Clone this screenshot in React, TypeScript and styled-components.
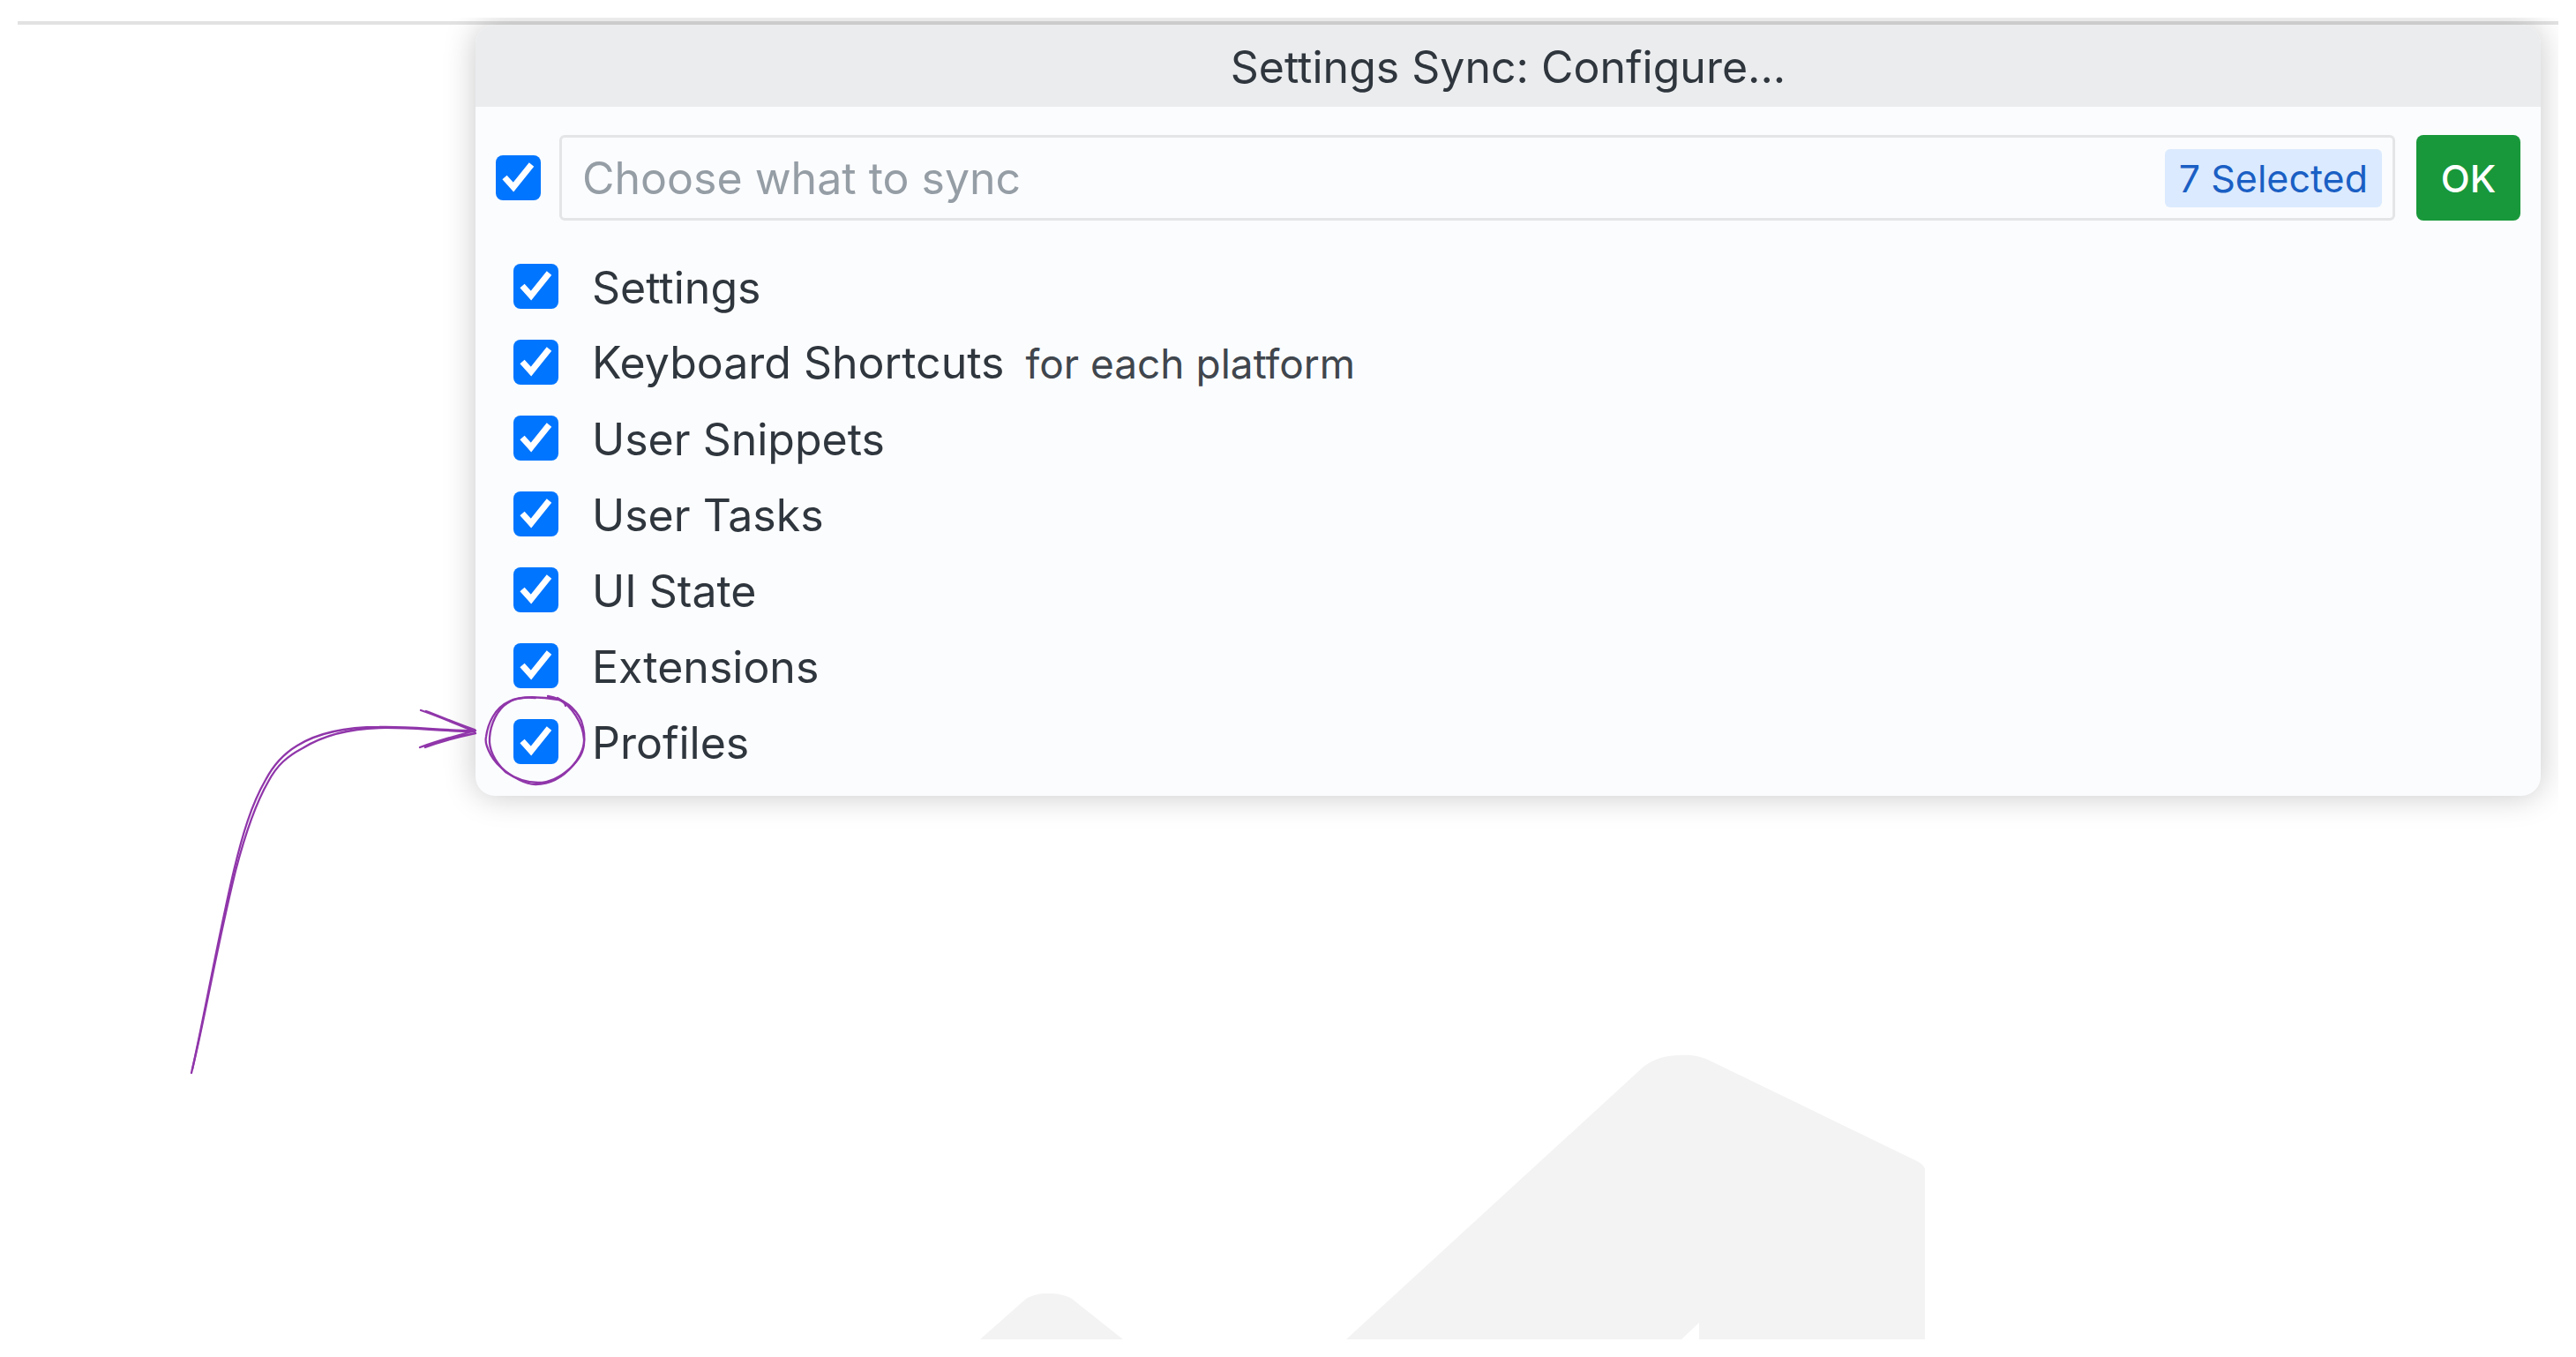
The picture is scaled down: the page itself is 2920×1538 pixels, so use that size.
import React, { useState } from "react";
import styled, { createGlobalStyle } from "styled-components";

const GlobalStyle = createGlobalStyle`
  *, *::before, *::after { box-sizing: border-box; }
  body {
    margin: 0;
    background: #ffffff;
    font-family: Inter, "Liberation Sans", sans-serif;
  }
`;

const Page = styled.main`
  display: flex;
  min-height: 100vh;
  padding: 20px;
`;

const EditorWindow = styled.div`
  display: flex;
  flex: 1;
  flex-direction: column;
  overflow: hidden;
  background: #ffffff;
`;

const WindowEdge = styled.div`
  flex: none;
  height: 8px;
  border-bottom: 4px solid #e2e2e2;
`;

const Workspace = styled.div`
  display: flex;
  flex: 1;
  flex-direction: column;
  justify-content: space-between;
`;

const QuickPick = styled.form`
  position: relative;
  margin: 0 20px 0 519px;
  border-radius: 22px;
  background: #fbfcfe;
  box-shadow: 0 0 36px rgba(0, 0, 0, 0.22);
`;

const Title = styled.h1`
  margin: 0;
  padding: 18px 24px 15px;
  border-radius: 22px 22px 0 0;
  background: #ebecee;
  color: #2f363d;
  font-size: 50px;
  font-weight: 400;
  line-height: 60px;
  text-align: center;
`;

const Toolbar = styled.div`
  display: flex;
  align-items: center;
  gap: 24px;
  padding: 32px 23px 0;
`;

const FilterGroup = styled.div`
  display: flex;
  flex: 1;
  align-items: center;
  gap: 21px;
`;

const FilterField = styled.div`
  display: flex;
  flex: 1;
  align-items: center;
  height: 97px;
  padding: 0 12px 0 23px;
  border: 3px solid #e4e5e7;
  border-radius: 6px;
`;

const FilterInput = styled.input`
  flex: 1;
  min-width: 0;
  padding: 0;
  border: 0;
  outline: 0;
  background: transparent;
  color: #2f363d;
  font: 400 50px/60px Inter, "Liberation Sans", sans-serif;

  &::placeholder {
    color: #959da5;
    opacity: 1;
  }
`;

const CountBadge = styled.span`
  padding: 3px 16px;
  border-radius: 6px;
  background: #dbeafe;
  color: #1a5fc4;
  font-size: 43px;
  line-height: 60px;
`;

const OkButton = styled.button`
  width: 118px;
  height: 97px;
  padding: 0;
  border: 0;
  border-radius: 8px;
  background: #18983a;
  color: #ffffff;
  font: 500 43px/60px Inter, "Liberation Sans", sans-serif;
`;

const CheckBox = styled.span`
  position: relative;
  flex: none;
  width: 51px;
  height: 51px;
`;

const CheckInput = styled.input`
  display: block;
  width: 100%;
  height: 100%;
  margin: 0;
  appearance: none;
  border-radius: 8px;
  background: #ffffff;
  box-shadow: inset 0 0 0 2px #c4c8cc;

  &:checked {
    background: #0075ff;
    box-shadow: none;
  }
`;

const CheckMark = styled.svg`
  position: absolute;
  inset: 0;
  pointer-events: none;
`;

const OptionList = styled.ul`
  margin: 0;
  padding: 31px 43px 19px;
  list-style: none;
`;

const Option = styled.label`
  display: flex;
  align-items: center;
  gap: 38px;
  height: 86px;
`;

const OptionText = styled.span`
  display: flex;
  align-items: baseline;
  gap: 24px;
  padding-top: 3px;
  color: #2f363d;
  font-size: 50px;
  line-height: 60px;
`;

const OptionDetail = styled.small`
  color: #40464d;
  font-size: 46px;
`;

const Annotation = styled.svg`
  position: absolute;
  left: -339px;
  bottom: -338px;
  width: 480px;
  height: 460px;
  pointer-events: none;
`;

const Watermark = styled.svg`
  flex: none;
  display: block;
  width: 1080px;
  height: 324px;
  margin-left: 1086px;
`;

const OPTIONS = [
  { id: "settings", label: "Settings" },
  { id: "keybindings", label: "Keyboard Shortcuts", detail: "for each platform" },
  { id: "snippets", label: "User Snippets" },
  { id: "tasks", label: "User Tasks" },
  { id: "state", label: "UI State" },
  { id: "extensions", label: "Extensions" },
  { id: "profiles", label: "Profiles" },
];

type TickProps = {
  id?: string;
  label?: string;
  checked: boolean;
  onChange: () => void;
};

function Tick({ id, label, checked, onChange }: TickProps) {
  return (
    <CheckBox>
      <CheckInput id={id} type="checkbox" aria-label={label} checked={checked} onChange={onChange} />
      {checked && (
        <CheckMark viewBox="0 0 51 51" aria-hidden="true">
          <path d="M10 25 L20 36 L40.5 10.5" fill="none" stroke="#ffffff" strokeWidth="7" />
        </CheckMark>
      )}
    </CheckBox>
  );
}

export default function App() {
  const [selected, setSelected] = useState<string[]>(OPTIONS.map((o) => o.id));
  const allSelected = selected.length === OPTIONS.length;

  const toggle = (id: string) =>
    setSelected((cur) => (cur.includes(id) ? cur.filter((x) => x !== id) : [...cur, id]));

  return (
    <>
      <GlobalStyle />
      <Page>
        <EditorWindow>
          <WindowEdge />
          <Workspace>
            <QuickPick onSubmit={(e) => e.preventDefault()}>
              <Title>Settings Sync: Configure...</Title>
              <Toolbar>
                <FilterGroup>
                  <Tick
                    label="Toggle all"
                    checked={allSelected}
                    onChange={() => setSelected(allSelected ? [] : OPTIONS.map((o) => o.id))}
                  />
                  <FilterField>
                    <FilterInput type="text" placeholder="Choose what to sync" aria-label="Choose what to sync" />
                    <CountBadge>{selected.length} Selected</CountBadge>
                  </FilterField>
                </FilterGroup>
                <OkButton type="submit">OK</OkButton>
              </Toolbar>
              <OptionList>
                {OPTIONS.map((o) => (
                  <li key={o.id}>
                    <Option htmlFor={o.id}>
                      <Tick id={o.id} checked={selected.includes(o.id)} onChange={() => toggle(o.id)} />
                      <OptionText>
                        {o.label}
                        {o.detail && <OptionDetail>{o.detail}</OptionDetail>}
                      </OptionText>
                    </Option>
                  </li>
                ))}
              </OptionList>
              <Annotation viewBox="200 780 480 460" aria-hidden="true">
                <g fill="none" stroke="#9036aa" strokeWidth="2.3" strokeLinecap="round" strokeLinejoin="round">
                  <path d="M217 1216 C230 1160 246 1068 265 987 C275 945 285 912 301 884 C311 865 322 854 337 845 C358 832 388 824 430 824 C465 823 500 828 538 828" />
                  <path d="M218 1212 C233 1150 246 1072 267 987 C278 945 289 912 304 886 C314 867 326 857 343 848 C364 835 394 826 430 825 C465 824 500 829 538 829" />
                  <path d="M477 805 C498 812 520 822 538 829 M483 806 C502 813 522 822 538 827" />
                  <path d="M476 847 C498 839 520 833 539 828 M482 847 C500 840 520 835 539 831" />
                  <path d="M621 789 C642 793 653 804 659 817 C666 838 662 852 650 867 C639 880 624 889 607 889 C595 889 581 881 567 869 C555 858 549 842 551 835 C553 820 561 802 577 795 C590 788 616 790 633 793 C638 795 641 797 641 800" />
                  <path d="M632 791 C648 800 661 820 662 838 C663 853 655 862 647 870 C636 880 624 887 610 887 C596 887 585 883 573 875 C560 862 554 848 555 836 C556 820 564 804 575 797 C583 791 596 790 607 791" />
                </g>
              </Annotation>
            </QuickPick>
            <Watermark viewBox="1106 1194 1080 324" aria-hidden="true">
              <g fill="#f3f3f3">
                <path d="M1526 1518 L1863 1209 C1876 1199 1890 1196 1904 1196 C1918 1195 1928 1197 1940 1203 L2173 1316 Q2182 1321 2182 1326 V1518 H1926 V1499 L1906 1518 Z" />
                <path d="M1111 1518 L1163 1472 C1172 1467 1178 1466 1188 1466 C1198 1466 1206 1467 1215 1472 L1273 1518 Z" />
              </g>
            </Watermark>
          </Workspace>
        </EditorWindow>
      </Page>
    </>
  );
}
